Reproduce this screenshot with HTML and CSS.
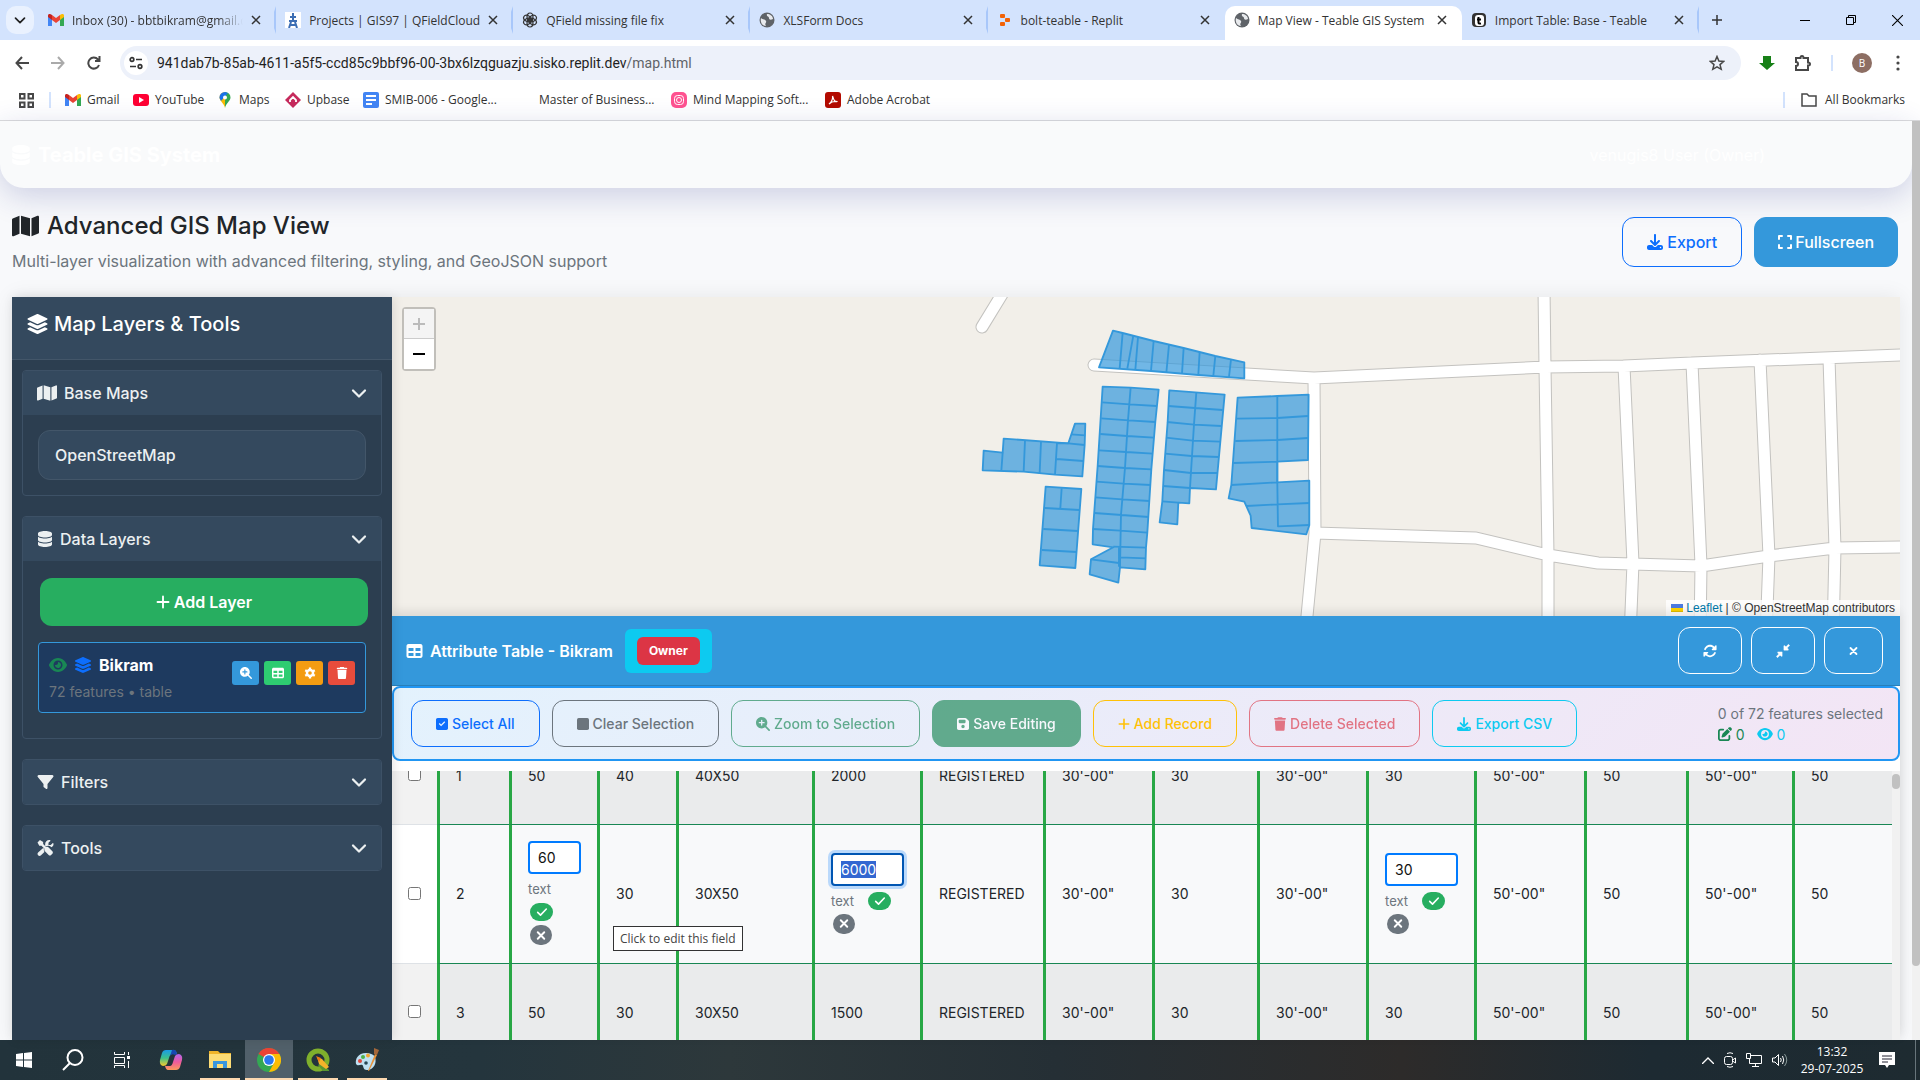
FILE: index.html
```html
<!DOCTYPE html>
<html lang="en">
<head>
<meta charset="utf-8">
<title>Map View - Teable GIS System</title>
<link rel="stylesheet" href="styles.css">
</head>
<body>
<svg class="defs" aria-hidden="true">
  <symbol id="map" viewBox="0 0 576 512"><path d="M384 476.1L192 421.2V35.9L384 90.8V476.1zm32-1.2V88.4L543.1 37.5c15.8-6.3 32.9 5.3 32.9 22.3V394.6c0 9.8-6 18.6-15.1 22.3L416 474.8zM15.1 95.1L160 37.2V423.6L32.9 474.5C17.1 480.8 0 469.2 0 452.2V117.4c0-9.8 6-18.6 15.1-22.3z"/></symbol>
  <symbol id="database" viewBox="0 0 448 512"><path d="M448 80v48c0 44.2-100.3 80-224 80S0 172.2 0 128V80C0 35.8 100.3 0 224 0S448 35.8 448 80zM393.2 214.7c20.8-7.4 39.9-16.9 54.8-28.6V288c0 44.2-100.3 80-224 80S0 332.2 0 288V186.1c14.9 11.8 34 21.2 54.8 28.6C99.7 230.7 159.5 240 224 240s124.3-9.3 169.2-25.3zM0 346.1c14.9 11.8 34 21.2 54.8 28.6C99.7 390.7 159.5 400 224 400s124.3-9.3 169.2-25.3c20.8-7.4 39.9-16.9 54.8-28.6V432c0 44.2-100.3 80-224 80S0 476.2 0 432V346.1z"/></symbol>
  <symbol id="layers" viewBox="0 0 576 512"><path d="M264.5 5.2c14.9-6.9 32.1-6.9 47 0l218.6 101c8.5 3.9 13.9 12.4 13.9 21.8s-5.4 17.9-13.9 21.8l-218.6 101c-14.9 6.9-32.1 6.9-47 0L45.9 149.8C37.4 145.8 32 137.3 32 128s5.4-17.9 13.9-21.8L264.5 5.2zM476.9 209.6l53.2 24.6c8.5 3.9 13.9 12.4 13.9 21.8s-5.4 17.9-13.9 21.8l-218.6 101c-14.9 6.9-32.1 6.9-47 0L45.9 277.8C37.4 273.8 32 265.3 32 256s5.4-17.9 13.9-21.8l53.2-24.6 152 70.2c23.4 10.8 50.4 10.8 73.8 0l152-70.2zm-152 198.2l152-70.2 53.2 24.6c8.5 3.9 13.9 12.4 13.9 21.8s-5.4 17.9-13.9 21.8l-218.6 101c-14.9 6.9-32.1 6.9-47 0L45.9 405.8C37.4 401.8 32 393.3 32 384s5.4-17.9 13.9-21.8l53.2-24.6 152 70.2c23.4 10.8 50.4 10.8 73.8 0z"/></symbol>
  <symbol id="filter" viewBox="0 0 512 512"><path d="M3.9 54.9C10.5 40.9 24.5 32 40 32H472c15.5 0 29.5 8.9 36.1 22.9s4.6 30.5-5.2 42.5L320 320.9V448c0 12.1-6.8 23.2-17.7 28.6s-23.8 4.3-33.5-3l-64-48c-8.1-6-12.8-15.5-12.8-25.6V320.9L9 97.3C-.7 85.4-2.8 68.8 3.9 54.9z"/></symbol>
  <symbol id="tools" viewBox="0 0 512 512"><path d="M78 1L0 79l56 104h72l96 96c-12 26-8 58 14 80l118 118c22 22 57 22 79 0l40-40c22-22 22-57 0-79L357 240c-22-22-54-26-80-14l-96-96V64zM508 108c-3-12-18-15-26-7l-60 60h-71V90l60-60c8-8 5-23-7-26-90-20-165 50-158 138l-6 38 64 20c40-25 92-14 124 18l14 14c52-22 82-75 66-124zM19 397c-25 26-25 67 0 93 26 25 67 25 93 0l110-110c-20-30-24-66-12-98l-30-30z"/></symbol>
  <symbol id="chevron" viewBox="0 0 512 512"><path d="M64 176L256 368 448 176" fill="none" stroke="currentColor" stroke-width="72" stroke-linecap="round" stroke-linejoin="round"/></symbol>
  <symbol id="plus" viewBox="0 0 448 512"><path d="M224 80V432M48 256H400" fill="none" stroke="currentColor" stroke-width="60" stroke-linecap="round"/></symbol>
  <symbol id="table" viewBox="0 0 512 512"><path d="M64 256V160H224v96H64zm0 64H224v96H64V320zm224 96V320H448v96H288zM448 256H288V160H448v96zM64 32C28.7 32 0 60.7 0 96V416c0 35.3 28.7 64 64 64H448c35.3 0 64-28.7 64-64V96c0-35.3-28.7-64-64-64H64z"/></symbol>
  <symbol id="download" viewBox="0 0 512 512"><path d="M288 32c0-17.7-14.3-32-32-32s-32 14.3-32 32V274.7l-73.4-73.4c-12.5-12.5-32.8-12.5-45.3 0s-12.5 32.8 0 45.3l128 128c12.5 12.5 32.8 12.5 45.3 0l128-128c12.5-12.5 12.5-32.8 0-45.3s-32.8-12.5-45.3 0L288 274.7V32zM64 352c-35.3 0-64 28.7-64 64v32c0 35.3 28.7 64 64 64H448c35.3 0 64-28.7 64-64V416c0-35.3-28.7-64-64-64H346.5l-45.3 45.3c-25 25-65.5 25-90.5 0L165.5 352H64zm368 56a24 24 0 1 1 0 48 24 24 0 1 1 0-48z"/></symbol>
  <symbol id="expand" viewBox="0 0 448 512"><path d="M32 160V64H128M320 64H416V160M416 352V448H320M128 448H32V352" fill="none" stroke="currentColor" stroke-width="64" stroke-linecap="round" stroke-linejoin="round"/></symbol>
  <symbol id="trash" viewBox="0 0 448 512"><path d="M135.2 17.7L128 32H32C14.3 32 0 46.3 0 64S14.3 96 32 96H416c17.7 0 32-14.3 32-32s-14.3-32-32-32H320l-7.2-14.3C307.4 6.8 296.3 0 284.2 0H163.8c-12.1 0-23.2 6.8-28.6 17.7zM416 128H32L53.2 467c1.6 25.3 22.6 45 47.9 45H346.9c25.3 0 46.3-19.7 47.9-45L416 128z"/></symbol>
  <symbol id="checkbox" viewBox="0 0 448 512"><path fill-rule="evenodd" d="M64 32C28.700 32 0 60.700 0 96V416c0 35.300 28.700 64 64 64H384c35.300 0 64-28.700 64-64V96c0-35.300-28.700-64-64-64zM103 253l34-34 55 55 119-119 34 34-153 153z"/></symbol>
  <symbol id="square" viewBox="0 0 448 512"><rect y="32" width="448" height="448" rx="64"/></symbol>
  <symbol id="save" viewBox="0 0 448 512"><path d="M64 32C28.700 32 0 60.700 0 96V416c0 35.300 28.700 64 64 64H384c35.300 0 64-28.700 64-64V173.300c0-17-6.700-33.300-18.700-45.300L352 50.700C340 38.700 323.700 32 306.700 32H64zm0 96c0-17.700 14.300-32 32-32H288c17.700 0 32 14.300 32 32v64c0 17.700-14.300 32-32 32H96c-17.700 0-32-14.300-32-32V128zM224 288a64 64 0 1 1 0 128 64 64 0 1 1 0-128z" fill-rule="evenodd"/></symbol>
  <symbol id="zoom" viewBox="0 0 512 512"><path d="M416 208c0 45.9-14.9 88.3-40 122.7L502.6 457.4c12.5 12.5 12.5 32.8 0 45.3s-32.8 12.5-45.3 0L330.7 376c-34.4 25.2-76.8 40-122.7 40C93.1 416 0 322.900 0 208S93.1 0 208 0S416 93.1 416 208zM184 296c0 13.3 10.7 24 24 24s24-10.7 24-24V232h64c13.3 0 24-10.700 24-24s-10.7-24-24-24H232V120c0-13.3-10.7-24-24-24s-24 10.7-24 24v64H120c-13.3 0-24 10.7-24 24s10.7 24 24 24h64v64z"/></symbol>
  <symbol id="eye" viewBox="0 0 576 512"><path d="M288 32c-80.8 0-145.5 36.8-192.6 80.6C48.6 156 17.3 208 2.5 243.7c-3.3 7.9-3.3 16.7 0 24.6C17.3 304 48.6 356 95.4 399.4C142.5 443.2 207.2 480 288 480s145.5-36.8 192.6-80.6c46.8-43.5 78.1-95.4 93-131.1c3.3-7.9 3.3-16.7 0-24.6c-14.9-35.7-46.2-87.7-93-131.1C433.5 68.8 368.8 32 288 32zM144 256a144 144 0 1 1 288 0 144 144 0 1 1 -288 0zm144-64c0 35.3-28.7 64-64 64c-7.1 0-13.9-1.2-20.3-3.3c-5.5-1.8-11.9 1.6-11.7 7.4c.3 6.9 1.3 13.8 3.2 20.7c13.700 51.2 66.4 81.6 117.600 67.9s81.6-66.4 67.9-117.6c-11.1-41.5-47.8-69.4-88.6-71.1c-5.8-.2-9.2 6.1-7.4 11.7c2.1 6.4 3.3 13.2 3.3 20.3z"/></symbol>
  <symbol id="edit" viewBox="0 0 512 512"><path d="M471.6 21.7c-21.9-21.9-57.3-21.9-79.2 0L362.3 51.7l97.9 97.9 30.1-30.1c21.9-21.9 21.9-57.3 0-79.2L471.600 21.7zm-299.2 220c-6.1 6.1-10.8 13.6-13.5 21.9l-29.6 88.8c-2.9 8.6-.6 18.1 5.8 24.6s15.9 8.7 24.6 5.8l88.8-29.6c8.2-2.7 15.7-7.4 21.9-13.5L437.7 172.3 339.7 74.3 172.4 241.7zM96 64C43 64 0 107 0 160V416c0 53 43 96 96 96H352c53 0 96-43 96-96V320c0-17.7-14.3-32-32-32s-32 14.3-32 32v96c0 17.7-14.3 32-32 32H96c-17.7 0-32-14.3-32-32V160c0-17.7 14.3-32 32-32h96c17.7 0 32-14.3 32-32s-14.3-32-32-32H96z"/></symbol>
  <symbol id="rotate" viewBox="0 0 512 512"><path d="M142.9 142.9c62.2-62.2 162.7-62.5 225.3-1L327 183c-6.9 6.9-8.9 17.2-5.2 26.2s12.500 14.8 22.2 14.8H463.5h8.5c13.3 0 24-10.7 24-24V72c0-9.7-5.8-18.5-14.8-22.2s-19.3-1.7-26.2 5.2L413.4 96.6c-87.6-86.5-228.7-86.2-315.8 1C73.2 122 55.6 150.7 44.8 181.4c-5.9 16.7 2.9 34.9 19.5 40.8s34.9-2.9 40.8-19.5c7.7-21.8 20.2-42.3 37.8-59.8zM16 312v7.600.7V440c0 9.7 5.8 18.5 14.8 22.2s19.3 1.7 26.2-5.2l41.6-41.6c87.6 86.5 228.7 86.2 315.8-1c24.4-24.4 42.1-53.1 52.9-83.7c5.9-16.7-2.9-34.9-19.5-40.8s-34.9 2.9-40.8 19.5c-7.7 21.8-20.2 42.3-37.8 59.8c-62.2 62.2-162.7 62.5-225.3 1L185 329c6.9-6.9 8.9-17.2 5.2-26.2s-12.5-14.8-22.2-14.8H48.4h-.7H40c-13.3 0-24 10.7-24 24z"/></symbol>
  <symbol id="minimize" viewBox="0 0 512 512"><path d="M456 12L500 56 410 146 448 184V224H288V64H328L366 102ZM56 500L12 456 102 366 64 328V288H224V448H184L146 410Z" stroke="currentColor" stroke-width="16" stroke-linejoin="round"/></symbol>
  <symbol id="cross" viewBox="0 0 384 512"><path d="M64 128L320 384M320 128L64 384" fill="none" stroke="currentColor" stroke-width="76" stroke-linecap="round"/></symbol>
  <symbol id="check" viewBox="0 0 448 512"><path d="M40 270L160 390 408 130" fill="none" stroke="currentColor" stroke-width="68" stroke-linecap="round" stroke-linejoin="round"/></symbol>
  <symbol id="gear" viewBox="0 0 512 512"><circle cx="256" cy="256" r="130" fill="none" stroke="currentColor" stroke-width="104"/><path d="M256 20V130M256 382V492M52 138L147 193M365 319L460 374M460 138L365 193M147 319L52 374" stroke="currentColor" stroke-width="100"/></symbol>
  <symbol id="x" viewBox="0 0 10 10"><path d="M1 1L9 9M9 1L1 9" stroke="currentColor" stroke-width="1.500"/></symbol>
  <symbol id="globe" viewBox="0 0 16 16"><circle cx="8" cy="8" r="7.500" fill="#5f6368"/><path d="M2 6C4 8 6 7 7 9S5 11 7 14C3 14 1 10 2 6ZM8 2C7 5 10 4 10 6S12 8 14 7C14 4 11 2 8 2Z" fill="#e8eaed"/></symbol>
  <symbol id="gmail" viewBox="0 0 16 12"><path d="M0 1.500V12H4V4.500z" fill="#4285f4"/><path d="M12 4.500V12H16V1.500z" fill="#34a853"/><path d="M12 1V6L16 3V1.500C16 0 14-.5 12 1z" fill="#fbbc04"/><path d="M4 1V6L8 9 12 6V1L8 4z" fill="#ea4335"/><path d="M0 1.500V3L4 6V1C2-.5 0 0 0 1.500z" fill="#c5221f"/></symbol>
</svg>

<header class="chrome">
  <div class="tabstrip">
    <button class="tabsearch" aria-label="Search tabs"><svg width="12" height="12"><use href="#chevron"/></svg></button>
    <div class="tabs">
      <div class="tab"><svg width="16" height="12"><use href="#gmail"/></svg><span class="fade">Inbox (30) - bbtbikram@gmail.com</span><button aria-label="Close"><svg width="10" height="10"><use href="#x"/></svg></button></div>
      <div class="tab"><svg width="16" height="16" viewBox="0 0 16 16"><path fill="#fff" d="M0 0h16v16H0z"/><path d="M8 1V9M5 5H11M4 9H12M6 10L4 16M10 10L12 16M5 13H11" stroke="#3c6eb4" stroke-width="2"/></svg><span>Projects | GIS97 | QFieldCloud</span><button aria-label="Close"><svg width="10" height="10"><use href="#x"/></svg></button></div>
      <div class="tab"><svg width="16" height="16" viewBox="0 0 16 16" fill="none" stroke="#333" stroke-width="1.200"><ellipse cx="8" cy="5" rx="3" ry="4"/><ellipse cx="8" cy="5" rx="3" ry="4" transform="rotate(60 8 8)"/><ellipse cx="8" cy="5" rx="3" ry="4" transform="rotate(120 8 8)"/><ellipse cx="8" cy="5" rx="3" ry="4" transform="rotate(180 8 8)"/><ellipse cx="8" cy="5" rx="3" ry="4" transform="rotate(240 8 8)"/><ellipse cx="8" cy="5" rx="3" ry="4" transform="rotate(300 8 8)"/></svg><span>QField missing file fix</span><button aria-label="Close"><svg width="10" height="10"><use href="#x"/></svg></button></div>
      <div class="tab"><svg width="16" height="16"><use href="#globe"/></svg><span>XLSForm Docs</span><button aria-label="Close"><svg width="10" height="10"><use href="#x"/></svg></button></div>
      <div class="tab"><svg width="16" height="16" viewBox="0 0 16 16" fill="#f26207"><rect x="3" y="2" width="5" height="4" rx="1"/><rect x="8" y="6" width="5" height="4" rx="1"/><rect x="3" y="10" width="5" height="4" rx="1"/></svg><span>bolt-teable - Replit</span><button aria-label="Close"><svg width="10" height="10"><use href="#x"/></svg></button></div>
      <div class="tab active"><svg width="16" height="16"><use href="#globe"/></svg><span>Map View - Teable GIS System</span><button aria-label="Close"><svg width="10" height="10"><use href="#x"/></svg></button></div>
      <div class="tab last"><svg width="16" height="16" viewBox="0 0 16 16"><rect x="1" y="1" width="14" height="14" rx="4"/><rect x="4" y="3" width="9" height="11" rx="3" fill="#fff"/><path d="M7.500 5V10.500Q7.500 12 10 11.500M6 7.500H10" stroke="#000" stroke-width="2" fill="none"/></svg><span>Import Table: Base - Teable</span><button aria-label="Close"><svg width="10" height="10"><use href="#x"/></svg></button></div>
    </div>
    <button class="newtab" aria-label="New tab"><svg width="12" height="12" viewBox="0 0 12 12"><path d="M6 1V11M1 6H11" stroke="#333" stroke-width="1.500"/></svg></button>
    <div class="winctl">
      <button aria-label="Minimize"><svg width="10" height="10" viewBox="0 0 10 10"><path d="M0 5.500H10" stroke="#000"/></svg></button>
      <button aria-label="Restore"><svg width="10" height="10" viewBox="0 0 10 10" fill="none" stroke="#000"><path d="M.5 2.500H7.500V9.500H.5ZM2.500 2.500V.5H9.500V7.500H7.500"/></svg></button>
      <button aria-label="Close window"><svg width="11" height="11" viewBox="0 0 10 10"><path d="M0 0L10 10M10 0L0 10" stroke="#000"/></svg></button>
    </div>
  </div>
  <div class="addressrow">
    <button aria-label="Back"><svg width="14" height="14" viewBox="0 0 14 14" fill="none" stroke="#474747" stroke-width="2"><path d="M14 7H2M7 1L1.500 7 7 13"/></svg></button>
    <button aria-label="Forward"><svg width="14" height="14" viewBox="0 0 14 14" fill="none" stroke="#aaa" stroke-width="2"><path d="M0 7H12M7 1L12.500 7 7 13"/></svg></button>
    <button aria-label="Reload"><svg width="14" height="14" viewBox="0 0 14 14" fill="none" stroke="#474747" stroke-width="2"><path d="M12 9A5.500 5.500 0 1 1 11 3.500M12.500 0V5H8"/></svg></button>
    <div class="omnibox">
      <span class="site"><svg width="14" height="14" viewBox="0 0 14 14" fill="none" stroke="#333" stroke-width="1.700"><circle cx="3" cy="3.500" r="1.800"/><path d="M7 3.500H13M1 10.500H7"/><circle cx="11" cy="10.500" r="1.800"/></svg></span>
      <span class="url">941dab7b-85ab-4611-a5f5-ccd85c9bbf96-00-3bx6lzqguazju.sisko.replit.dev<span>/map.html</span></span>
      <svg width="16" height="16" viewBox="0 0 16 16" fill="none" stroke="#474747" stroke-width="1.500"><path d="M8 1.500L9.900 6 14.800 6.400 11 9.600 12.200 14.300 8 11.800 3.800 14.300 5 9.600 1.200 6.400 6.100 6Z"/></svg>
    </div>
    <div class="ext">
      <svg width="16" height="16" viewBox="0 0 16 16" fill="#178017"><path d="M4 1H12V8H16L8 15 0 8H4Z"/></svg>
      <svg width="18" height="18" viewBox="0 0 18 18" fill="none" stroke="#474747" stroke-width="2"><path d="M2 4H6.500Q6.500 2 8 2T9.500 4H14V8.500Q16 8.500 16 10T14 11.500V16H2V12Q4 12 4 10T2 8Z"/></svg>
      <i class="sep"></i><span class="avatar">B</span>
      <svg width="4" height="16" viewBox="0 0 4 16" fill="#474747"><circle cx="2" cy="2" r="1.600"/><circle cx="2" cy="8" r="1.600"/><circle cx="2" cy="14" r="1.600"/></svg>
    </div>
  </div>
  <nav class="bookmarks">
    <svg class="apps" width="15" height="15" viewBox="0 0 15 15" fill="none" stroke="#474747" stroke-width="2"><path d="M1 1H5.500V5.500H1ZM9.500 1H14V5.500H9.500ZM1 9.500H5.500V14H1ZM9.500 9.500H14V14H9.500Z"/></svg>
    <i class="sep"></i>
    <a href="#gmail" class="bm w-gmail"><svg width="16" height="12"><use href="#gmail"/></svg>Gmail</a>
    <a href="#youtube" class="bm w-yt"><svg width="16" height="12" viewBox="0 0 16 12"><rect width="16" height="12" rx="3" fill="#f03"/><path d="M6 3V9L11 6Z" fill="#fff"/></svg>YouTube</a>
    <a href="#maps" class="bm w-maps"><svg width="16" height="16" viewBox="0 0 16 16"><path d="M8 0A5.500 5.500 0 0 1 13.500 5.500C13.500 9 9 11 8 16Z" fill="#34a853"/><path d="M8 0A5.500 5.500 0 0 0 2.500 5.500C2.500 9 7 11 8 16Z" fill="#fbbc04"/><path d="M2.500 6A5.500 5.500 0 0 1 8 0L11 1 4 9Z" fill="#1a73e8"/><circle cx="8" cy="5.500" r="2" fill="#fff"/></svg>Maps</a>
    <a href="#upbase" class="bm w-up"><svg width="16" height="16" viewBox="0 0 16 16"><path d="M8 0L16 8 8 16 0 8Z" fill="#c62a5c"/><path d="M5 10V8L8 5 11 8V10" stroke="#fff" stroke-width="1.800" fill="none"/></svg>Upbase</a>
    <a href="#smib" class="bm w-smib"><svg width="16" height="16" viewBox="0 0 16 16"><rect width="16" height="16" rx="2" fill="#4285f4"/><path d="M3 4H13M3 8H13M3 12H9" stroke="#fff" stroke-width="1.800"/></svg>SMIB-006 - Google...</a>
    <a href="#mob" class="bm w-mob"><svg width="16" height="16"></svg>Master of Business...</a>
    <a href="#mind" class="bm w-mind"><svg width="16" height="16" viewBox="0 0 16 16"><rect width="16" height="16" rx="5" fill="#ff5290"/><circle cx="8" cy="8" r="2.500" fill="none" stroke="#fff"/><rect x="3.500" y="3.500" width="9" height="9" rx="3" fill="none" stroke="#fff"/></svg>Mind Mapping Soft...</a>
    <a href="#acrobat" class="bm"><svg width="16" height="16" viewBox="0 0 16 16"><rect width="16" height="16" rx="3" fill="#b30b00"/><path d="M4 12C7 10 8 6 7.500 4 9 9 10 10 12.500 9.500 9 9 6 10 4 12Z" fill="none" stroke="#fff" stroke-width="1.200"/></svg>Adobe Acrobat</a>
    <i class="sep push"></i>
    <a href="#all" class="bm all"><svg width="16" height="14" viewBox="0 0 16 14" fill="none" stroke="#474747" stroke-width="1.500"><path d="M1 1H6L8 3H15V13H1Z"/></svg>All Bookmarks</a>
  </nav>
</header>

<div class="viewport">
<div class="page">
  <nav class="navbar">
    <a href="#home" class="brand"><svg width="18" height="20"><use href="#database"/></svg>Teable GIS System</a>
    <span class="user">venugis8 User (Owner)</span>
  </nav>
  <main class="content">
    <div class="pagehead">
      <div>
        <h1><svg width="27" height="24"><use href="#map"/></svg>Advanced GIS Map View</h1>
        <p>Multi-layer visualization with advanced filtering, styling, and GeoJSON support</p>
      </div>
      <div class="headbtns">
        <button class="btn lg blue"><svg width="16" height="16"><use href="#download"/></svg>Export</button>
        <button class="btn lg solid"><svg width="14" height="16"><use href="#expand"/></svg>Fullscreen</button>
      </div>
    </div>
    <div class="workspace">
      <aside class="sidebar">
        <h2><svg width="23" height="20"><use href="#layers"/></svg>Map Layers &amp; Tools</h2>
        <section class="panel"><h3><svg width="20" height="18"><use href="#map"/></svg>Base Maps<svg class="chev" width="16" height="16"><use href="#chevron"/></svg></h3>
          <div class="panelbody"><select aria-label="Base map"><option>OpenStreetMap</option></select></div></section>
        <section class="panel"><h3><svg width="16" height="16"><use href="#database"/></svg>Data Layers<svg class="chev" width="16" height="16"><use href="#chevron"/></svg></h3>
          <div class="panelbody layers">
            <button class="add"><svg width="14" height="16"><use href="#plus"/></svg>Add Layer</button>
            <div class="layer">
              <div><strong><svg class="green" width="18" height="16"><use href="#eye"/></svg><svg class="cobalt" width="18" height="16"><use href="#layers"/></svg>Bikram</strong><small>72 features • table</small></div>
              <div class="acts">
                <button class="a1" aria-label="Zoom to layer"><svg width="12" height="12"><use href="#zoom"/></svg></button>
                <button class="a2" aria-label="Attribute table"><svg width="12" height="12"><use href="#table"/></svg></button>
                <button class="a3" aria-label="Style"><svg width="12" height="12"><use href="#gear"/></svg></button>
                <button class="a4" aria-label="Delete"><svg width="12" height="12"><use href="#trash"/></svg></button>
              </div>
            </div>
          </div></section>
        <section class="panel"><h3><svg width="17" height="16"><use href="#filter"/></svg>Filters<svg class="chev" width="16" height="16"><use href="#chevron"/></svg></h3></section>
        <section class="panel"><h3><svg width="17" height="16"><use href="#tools"/></svg>Tools<svg class="chev" width="16" height="16"><use href="#chevron"/></svg></h3></section>
      </aside>
      <div class="mapside">
        <div class="map">
          <svg class="tiles" width="1508" height="319">
            <defs>
              <g id="roads" fill="none" stroke-linejoin="round" stroke-linecap="round">
                <path d="M612-6L590 30M702 68L922 81 1153 70 1232 69 1300 66 1508 58 1800 48M922 81L923 236 915 319 914 340M1152-9L1153 70 1156 258V340M923 236L1084 241 1156 258 1206 266 1309 269 1377 259 1443 251 1508 250H1800M1232 69L1241 266 1238 340M1300 66L1309 268 1308 340M1368 63L1377 259 1374 340M1437 61L1443 251 1441 340"/>
              </g>
            </defs>
            <use href="#roads" stroke="#c3c2bf" stroke-width="13"/>
            <use href="#roads" stroke="#fff" stroke-width="11"/>
            <g transform="translate(568 -7) scale(.3333)" fill="#3498db" fill-opacity=".7" stroke="#3498db" stroke-width="5.500" stroke-linejoin="round">
              <path d="M459 122L488 129 581 153 671 174 766 198 853 217V265L715 255 573 243 417 232Z"/>
              <path fill="none" d="M488 129L479 236M520 137L502 236M534 142L526 240M581 153L573 243M627 165L619 249M671 174L666 251M719 186L715 255M766 198L760 258M813 209L807 261"/>
              <path d="M428 290L512 293 596 299 586 396 574 538 562 728 558 773 556 838 480 832 475 878 389 853 393 808 460 772 398 763 399 717 413 528Z"/>
              <path fill="none" d="M512 293L504 391 495 534 483 675 480 832M427 337L509 343 590 348M424 385L506 391 586 396M421 432L501 438 581 443M417 481L498 486 578 491M413 528L495 534 574 538M409 575L491 581 572 585M406 622L487 628 569 633M403 669L485 675 566 681M399 717L481 722 562 728M460 770L558 773M480 802L558 805M393 808L477 819M477 770V830"/>
              <path d="M628 301L794 314 768 598 690 594 688 640 655 638 652 703 599 697 607 634 612 540 623 396Z"/>
              <path fill="none" d="M709 308L702 404 690 594M625 348L705 354 788 360M621 396L702 404 784 408M618 443L698 452 780 455M615 491L695 498 776 501M612 540L693 549 772 549M609 588L690 594M607 634L655 638"/>
              <path d="M833 323L952 318 1046 314 1044 510 952 515V577L1048 572V706L1039 733 875 714 872 677 853 635 806 625 814 585Z"/>
              <path fill="none" d="M952 318V577L954 709 1048 705M830 386L952 384 1044 378M826 453L952 450 1044 444M820 519L952 515M814 585L952 577M860 648L952 643 1048 639"/>
              <path d="M131 446L325 460 345 401H376L374 465 367 559 285 554 191 545 68 541 71 482 128 488Z"/>
              <path fill="none" d="M128 488L124 543M195 452L191 545M243 456L239 550M291 459L285 554M325 460L374 465M291 459L325 460M289 507L370 513M333 433L376 436"/>
              <path d="M257 590L364 597 346 834 239 826Z"/>
              <path fill="none" d="M305 595L301 655M254 654L358 660M250 717L354 723M246 780L350 786"/>
            </g>
          </svg>
          <div class="zoomctl"><button disabled aria-label="Zoom in"><svg width="12" height="12" viewBox="0 0 12 12"><path d="M6 0V12M0 6H12" stroke="currentColor" stroke-width="2"/></svg></button><button aria-label="Zoom out"><svg width="12" height="12" viewBox="0 0 12 12"><path d="M0 6H12" stroke="currentColor" stroke-width="2"/></svg></button></div>
          <div class="attribution"><svg width="12" height="8" viewBox="0 0 12 8"><path fill="#4c7be1" d="M0 0h12v4H0z"/><path fill="#ffd500" d="M0 4h12v3H0z"/><path fill="#e0bc00" d="M0 7h12v1H0z"/></svg> <a href="#leaflet">Leaflet</a> | © OpenStreetMap contributors</div>
        </div>
        <section class="attr">
          <header class="attrhead">
            <h4><svg width="17" height="16"><use href="#table"/></svg>Attribute Table - Bikram</h4>
            <span class="badge"><b>Owner</b></span>
            <div class="attrbtns">
              <button class="btn white" aria-label="Refresh"><svg width="14" height="14"><use href="#rotate"/></svg></button>
              <button class="btn white" aria-label="Minimize table"><svg width="14" height="14"><use href="#minimize"/></svg></button>
              <button class="btn white" aria-label="Close table"><svg width="9" height="14"><use href="#cross"/></svg></button>
            </div>
          </header>
          <div class="toolbar">
            <button class="btn blue"><svg width="12" height="14"><use href="#checkbox"/></svg>Select All</button>
            <button class="btn gray"><svg width="12" height="14"><use href="#square"/></svg>Clear Selection</button>
            <button class="btn grn dim"><svg width="14" height="14"><use href="#zoom"/></svg>Zoom to Selection</button>
            <button class="btn grnfill dim"><svg width="12" height="14"><use href="#save"/></svg>Save Editing</button>
            <button class="btn yellow"><svg width="12" height="14"><use href="#plus"/></svg>Add Record</button>
            <button class="btn red dim"><svg width="12" height="14"><use href="#trash"/></svg>Delete Selected</button>
            <button class="btn cyan"><svg width="14" height="14"><use href="#download"/></svg>Export CSV</button>
            <div class="stats"><span>0 of 72 features selected</span><span class="counts"><span class="green"><svg width="14" height="14"><use href="#edit"/></svg>0</span><span class="aqua"><svg width="16" height="14"><use href="#eye"/></svg>0</span></span></div>
          </div>
          <div class="tablebox">
            <div class="scroller">
            <table>
              <colgroup><col class="c45"><col class="c72"><col class="c88"><col class="c79"><col class="c136"><col class="c108"><col class="c123"><col class="c109"><col class="c105"><col class="c109"><col class="c108"><col class="c110"><col class="c102"><col class="c106"><col></colgroup>
              <tbody>
              <tr><td><input type="checkbox" aria-label="Select row 1"></td><td>1</td><td>50</td><td>40</td><td>40X50</td><td>2000</td><td>REGISTERED</td><td>30'-00"</td><td>30</td><td>30'-00"</td><td>30</td><td>50'-00"</td><td>50</td><td>50'-00"</td><td>50</td></tr>
              <tr class="editing"><td><input type="checkbox" aria-label="Select row 2"></td><td>2</td>
                <td><div class="edit"><input type="text" value="60" aria-label="Value"><span>text</span><button class="ok" aria-label="Save"><svg width="12" height="12"><use href="#check"/></svg></button><button class="no" aria-label="Cancel"><svg width="12" height="13"><use href="#cross"/></svg></button></div></td>
                <td class="tiphost">30<span class="tip" role="tooltip">Click to edit this field</span></td><td>30X50</td>
                <td><div class="edit"><input type="text" class="focus" id="active-field" value="6000" aria-label="Value"><span>text</span><button class="ok" aria-label="Save"><svg width="12" height="12"><use href="#check"/></svg></button><button class="no" aria-label="Cancel"><svg width="12" height="13"><use href="#cross"/></svg></button></div></td>
                <td>REGISTERED</td><td>30'-00"</td><td>30</td><td>30'-00"</td>
                <td><div class="edit"><input type="text" value="30" aria-label="Value"><span>text</span><button class="ok" aria-label="Save"><svg width="12" height="12"><use href="#check"/></svg></button><button class="no" aria-label="Cancel"><svg width="12" height="13"><use href="#cross"/></svg></button></div></td>
                <td>50'-00"</td><td>50</td><td>50'-00"</td><td>50</td></tr>
              <tr><td><input type="checkbox" aria-label="Select row 3"></td><td>3</td><td>50</td><td>30</td><td>30X50</td><td>1500</td><td>REGISTERED</td><td>30'-00"</td><td>30</td><td>30'-00"</td><td>30</td><td>50'-00"</td><td>50</td><td>50'-00"</td><td>50</td></tr>
              </tbody>
            </table>
            </div>
            <div class="innerbar"><i></i></div>
          </div>
        </section>
      </div>
    </div>
  </main>
</div>
<div class="pagebar"><i></i></div>
</div>

<footer class="taskbar">
  <button aria-label="Start"><svg width="16" height="16" viewBox="0 0 16 16" fill="#fff"><path d="M0 2L7 1V7.500H0ZM8 1L16 0V7.500H8ZM0 8.500H7V15L0 14ZM8 8.500H16V16L8 15Z"/></svg></button>
  <button aria-label="Search"><svg width="22" height="22" viewBox="0 0 22 22" fill="none" stroke="#fff" stroke-width="2"><circle cx="13" cy="8.500" r="7.500"/><path d="M8 14L1 21"/></svg></button>
  <button aria-label="Task view"><svg width="16" height="16" viewBox="0 0 16 16" fill="none" stroke="#fff"><path d="M.5 0V2.500H10.500V0M.5 5.500H10.500V11.500H.5ZM.5 16V13.500H10.500V16M14.500 0V3M14.500 9V16"/><rect x="13.500" y="4.500" width="2" height="2" fill="#fff"/></svg></button>
  <button aria-label="Copilot"><svg width="24" height="22" viewBox="0 0 24 22"><defs><linearGradient id="cpa" x1="0" y1="0" x2="0" y2="1"><stop offset="0" stop-color="#1a9be8"/><stop offset=".5" stop-color="#3bc08c"/><stop offset="1" stop-color="#f9c92b"/></linearGradient><linearGradient id="cpb" x1="0" y1="0" x2="0" y2="1"><stop offset="0" stop-color="#b066ee"/><stop offset=".5" stop-color="#ee5a9c"/><stop offset="1" stop-color="#fb9a5a"/></linearGradient></defs><path d="M7 1H15Q17 1 18 5H13Q11 5 10 9L8 15Q7 17 4 17 0 16 1 11L3 4Q4 1 7 1Z" fill="url(#cpa)"/><path d="M13 1Q17 0 18 5L16 6Q13 4 11 7Z" fill="#1748b0"/><path d="M17 21H9Q7 21 6 17H11Q13 17 14 13L16 7Q17 5 20 5 24 6 23 11L21 18Q20 21 17 21Z" fill="url(#cpb)"/></svg></button>
  <button class="run" aria-label="File Explorer"><svg width="22" height="20" viewBox="0 0 22 20"><path d="M0 1H9L11 3H22V18H0Z" fill="#f0b429"/><path d="M0 4H22V18H0Z" fill="#fddc75"/><path d="M4 18V11H18V18H14V14H8V18Z" fill="#3a96dd"/></svg></button>
  <button class="run current" aria-label="Chrome"><svg width="24" height="24" viewBox="0 0 24 24"><circle cx="12" cy="12" r="12" fill="#34a853"/><path d="M12 12L1.600 6A12 12 0 0 1 22.400 6Z" fill="#ea4335"/><path d="M12 6H22.400A12 12 0 0 1 12 24L17 15Z" fill="#fbbc04"/><path d="M1.600 6A12 12 0 0 1 12 0V6Z" fill="#ea4335"/><circle cx="12" cy="12" r="6" fill="#fff"/><circle cx="12" cy="12" r="4.800" fill="#2a78ee"/></svg></button>
  <button class="run" aria-label="QGIS"><svg width="24" height="24" viewBox="0 0 24 24"><circle cx="12" cy="12" r="9" fill="none" stroke="#7fb02c" stroke-width="5"/><path d="M15 15L23 22V23H17L12 17Z" fill="#589632"/><path d="M11 9L16 11 23 19 20 21 13 16Z" fill="#f3b32a"/><path d="M10 8L15 10 13 14Z" fill="#ee7913"/></svg></button>
  <button class="run" aria-label="Paint"><svg width="24" height="24" viewBox="0 0 24 24"><path d="M11 5C3 5 0 11 1 16 3 19 7 15 8 18S9 22 13 22C19 21 22 15 20 9 18 6 15 5 11 5Z" fill="#bfe0f2"/><circle cx="5" cy="13" r="2" fill="#e0483e"/><circle cx="8" cy="9" r="2" fill="#4db04a"/><circle cx="13" cy="7.500" r="2" fill="#f1a531"/><circle cx="11" cy="15" r="1.800" fill="#264653"/><path d="M13 23L20 6 22 7 14 23Z" fill="#e8923a"/><path d="M19 6L19 0 24 2 22 7Z" fill="#a3673b"/></svg></button>
  <div class="tray">
    <svg width="12" height="7" viewBox="0 0 12 7" fill="none" stroke="#fff" stroke-width="1.400"><path d="M0 7L6 1 12 7"/></svg>
    <svg width="12" height="16" viewBox="0 0 12 16" fill="none" stroke="#fff"><rect x=".5" y="4.500" width="8" height="8" rx="2"/><path d="M8.500 8L11.500 6V11L8.500 9M3 1.500Q6 0 9 1.500M3 14.500Q6 16 9 14.500"/></svg>
    <svg width="16" height="14" viewBox="0 0 16 14" fill="none" stroke="#fff"><path d="M5 2.500H15.500V10.500H3.500V6M9.500 10V13.500M6 13.500H13M.5.500H4.500V5.500H.5Z"/></svg>
    <svg width="17" height="14" viewBox="0 0 17 14" fill="none" stroke="#fff"><path d="M.5 5H3L6.500 1.500V12.500L3 9H.5ZM8.500 5Q10 7 8.500 9M10.500 3Q13 7 10.500 11"/><path d="M12.500 1Q17 7 12.500 13" stroke="#899"/></svg>
    <div class="clock"><span>13:32</span><span>29-07-2025</span></div>
    <svg width="16" height="16" viewBox="0 0 16 16"><path d="M0 0H16V13H10L8 16 6 13H0Z" fill="#fff"/><path d="M3 4H13M3 7H13M3 10H9" stroke="#223" /></svg>
    <i class="peek"></i>
  </div>
</footer>
<script src="main.js"></script>
</body>
</html>
```
FILE: styles.css
```css
* { box-sizing: border-box; }
html, body { height: 100%; }
body { margin: 0; display: flex; flex-direction: column; overflow: hidden; font-family: Inter, "Liberation Sans", sans-serif; font-size: 16px; color: #212529; background: #f8f9fa; }
button { font: inherit; color: inherit; border: 0; background: none; padding: 0; display: flex; align-items: center; justify-content: center; cursor: pointer; }
svg { flex: none; }
svg:not([fill]) { fill: currentColor; }
a { color: inherit; text-decoration: none; }
h1, h2, h3, h4, p { margin: 0; font-weight: 500; }
.defs { position: absolute; width: 0; height: 0; }

/* Browser frame */
.chrome { flex: none; font: 12px/16px "Open Sans", "Noto Sans", sans-serif; color: #333; background: #fff; border-bottom: 1px solid #dcdcdc; }
.tabstrip { display: flex; align-items: center; height: 40px; background: #d3e3fd; padding-left: 6px; }
.tabsearch { width: 28px; height: 28px; border-radius: 10px; background: #e9f1fe; margin-right: 5px; color: #222; }
.tabs { display: flex; flex: 0 1 1660px; min-width: 0; align-self: stretch; }
.tab { flex: 1 1 0; min-width: 0; display: flex; align-items: center; gap: 8px; margin-top: 6px; height: 28px; padding: 0 13px 0 9px; border-right: 2px solid #a8c7fa; border-block: 6px solid transparent; background-clip: padding-box; }
.tab:nth-child(5) { border-right-color: transparent; }
.tab span { flex: 1; min-width: 0; white-space: nowrap; overflow: hidden; padding-top: 1px; }
.fade { -webkit-mask-image: linear-gradient(90deg, #000 85%, transparent); mask-image: linear-gradient(90deg, #000 85%, transparent); }
.tab.active { height: 34px; border: 0; padding-bottom: 6px; padding-right: 15px; background: #fff; border-radius: 10px 10px 0 0; }
.newtab { width: 36px; height: 28px; }
.winctl { display: flex; margin-left: auto; }
.winctl button { width: 46px; height: 34px; }
.addressrow { display: flex; align-items: center; height: 46px; padding: 0 20px 0 4px; }
.addressrow > button { width: 36px; height: 34px; }
.omnibox { flex: 1; display: flex; align-items: center; gap: 9px; height: 34px; margin-left: 8px; padding: 0 16px 0 4px; border-radius: 17px; background: #edf1fa; }
.site { width: 24px; height: 24px; border-radius: 12px; background: #fff; display: flex; align-items: center; justify-content: center; }
.url { flex: 1; font: 14px/20px Roboto, sans-serif; color: #1f1f1f; }
.url span { color: #5f6368; }
.ext { display: flex; align-items: center; gap: 19px; margin-left: 18px; }
.sep { width: 2px; height: 16px; background: #d3e3fd; }
.avatar { width: 20px; height: 20px; border-radius: 10px; background: #8d6e63; color: #fff; font-size: 10px; line-height: 20px; text-align: center; }
.ext .avatar { margin-right: 5px; }
.bookmarks { display: flex; align-items: center; height: 34px; padding: 0 15px 6px 19px; }
.apps { margin-right: 15px; }
.bookmarks .sep { margin-right: 14px; }
.bm { display: flex; align-items: center; gap: 6px; white-space: nowrap; }
.w-gmail { width: 68px; } .w-yt { width: 84px; } .w-maps { width: 68px; } .w-up { width: 78px; }
.w-smib { width: 154px; } .w-mob { width: 154px; } .w-mind { width: 154px; }
.bookmarks .push { margin-left: auto; margin-right: 16px; }
.all { gap: 8px; }

/* Page */
.viewport { flex: 1; min-height: 0; display: flex; background: #f8f9fb; }
.page { flex: 1; min-width: 0; display: flex; flex-direction: column; }
.pagebar { width: 8px; background: #f1f1f1; }
.pagebar i { display: block; height: 92%; background: #c1c1c1; border-radius: 0 0 4px 4px; }
.navbar { flex: none; display: flex; align-items: center; justify-content: space-between; height: 67px; padding: 0 147px 0 12px; background: #f9fafb; border-radius: 0 0 24px 24px; box-shadow: 0 8px 32px rgba(31, 38, 135, .2); color: #fff; }
.brand { display: flex; align-items: center; gap: 8px; font-size: 20px; font-weight: 700; }
.content { flex: 1; min-height: 0; display: flex; flex-direction: column; padding: 0 12px; }
.pagehead { display: flex; justify-content: space-between; align-items: flex-start; height: 109px; padding: 22px 2px 0 0; }
h1 { display: flex; align-items: center; gap: 8px; font-size: 24px; line-height: 32px; }
.pagehead p { margin-top: 7px; font-weight: 400; line-height: 24px; color: #6c757d; }
.headbtns { display: flex; gap: 12px; padding-top: 7px; }
.btn { gap: 4px; height: 47px; padding: 0 24px; border: 1px solid; border-radius: 12px; font-size: 14px; font-weight: 500; white-space: nowrap; }
.btn.lg { height: 50px; font-size: 16px; }
.blue { color: #0d6efd; } .gray { color: #6c757d; } .grn { color: #198754; } .yellow { color: #ffc107; } .red { color: #dc3545; } .cyan { color: #0dcaf0; } .white { color: #fff; }
.btn.solid { gap: 3px; padding: 0 23px; background: #3498db; border-color: #3498db; color: #fff; }
.grnfill { background: #198754; border-color: #198754; color: #fff; }
.dim { opacity: .65; }
.workspace { flex: 1; min-height: 0; display: flex; box-shadow: 0 0 20px rgba(0, 0, 0, .08); }

/* Sidebar */
.sidebar { flex: none; width: 380px; background: #2c3e50; color: #fff; position: relative; z-index: 1; box-shadow: 2px 0 10px rgba(0, 0, 0, .1); }
h2 { display: flex; gap: 5px; height: 63px; padding: 15px 14px; font-size: 20px; line-height: 24px; background: #34495e; border-bottom: 1px solid #435669; margin-bottom: 10px; }
h2 svg { margin-top: 2px; }
.panel { margin: 0 10px 20px; border: 1px solid #3d5166; border-radius: 4px; overflow: hidden; }
h3 { display: flex; align-items: center; gap: 7px; height: 44px; padding: 0 14px; font-size: 16px; background: #34495e; color: #ecf0f1; }
.chev { margin-left: auto; }
.panelbody { padding: 15px; }
.panelbody select { display: block; width: 100%; height: 50px; padding: 0 16px; appearance: none; border: 1px solid #435669; border-radius: 12px; background: #34495e; color: #ecf0f1; font: 500 16px Inter, sans-serif; }
.panelbody.layers { padding-bottom: 25px; }
.add { width: 328px; height: 48px; margin: 2px 0 16px 2px; gap: 4px; border-radius: 12px; background: #27ae60; font-weight: 600; }
.layer { display: flex; justify-content: space-between; align-items: center; height: 71px; padding: 0 10px; border: 1px solid #3498db; border-radius: 4px; background: #1e3a5f; }
.layer strong { display: flex; align-items: center; gap: 7px; line-height: 24px; }
.layer small { display: block; margin-top: 4px; font-size: 14px; line-height: 21px; color: #6c757d; }
.green { color: #198754; } .cobalt { color: #0d6efd; } .aqua { color: #0dcaf0; }
.acts { display: flex; gap: 5px; padding-bottom: 9px; }
.acts button { width: 27px; height: 24px; border-radius: 3px; }
.a1 { background: #3498db; } .a2 { background: #2ecc71; } .a3 { background: #f39c12; } .a4 { background: #e74c3c; }

/* Map */
.mapside { flex: 1; min-width: 0; display: flex; flex-direction: column; }
.map { flex: none; position: relative; height: 319px; overflow: hidden; background: #f2efe9; }
.tiles { display: block; width: 100%; }
.zoomctl { position: absolute; left: 10px; top: 10px; border: 2px solid rgba(0, 0, 0, .2); border-radius: 4px; background-clip: padding-box; }
.zoomctl button { width: 30px; height: 30px; background: #fff; color: #000; }
.zoomctl button:disabled { background: #f4f4f4; color: #bbb; border-bottom: 1px solid #ccc; }
.attribution { position: absolute; right: 0; bottom: 0; padding: 0 5px; font: 12px/16px "Liberation Sans", Arial, sans-serif; color: #333; background: rgba(255, 255, 255, .8); }
.attribution a { color: #0078a8; }

/* Attribute table */
.attr { flex: 1; min-height: 0; display: flex; flex-direction: column; position: relative; background: #fff; box-shadow: 0 -4px 10px rgba(0, 0, 0, .1); }
.attrhead { flex: none; display: flex; align-items: center; gap: 12px; height: 70px; padding: 0 17px 0 14px; background: #3498db; border-bottom: 1px solid #2980b9; color: #fff; }
h4 { display: flex; align-items: center; gap: 7px; font-size: 16px; font-weight: 600; }
.badge { padding: 8px 12px; border-radius: 6px; background: #0dcaf0; }
.badge b { display: block; padding: 0 12px; border-radius: 6px; background: #dc3545; font-size: 12px; line-height: 28px; }
.attrbtns { display: flex; gap: 9px; margin-left: auto; }
.toolbar { flex: none; display: flex; align-items: center; gap: 12px; height: 75px; padding: 0 15px 0 17px; border: 2px solid #2196f3; border-radius: 8px; background: linear-gradient(135deg, #e3f2fd, #f3e5f5); }
.stats { margin-left: auto; display: flex; flex-direction: column; font-size: 14px; line-height: 21px; color: #6c757d; }
.counts, .counts span { display: flex; align-items: center; gap: 12px; }
.counts span { gap: 4px; }
.tablebox { flex: 1; min-height: 0; margin-top: 10px; display: flex; }
.scroller { flex: 1; min-width: 0; overflow: hidden; }
.innerbar { width: 8px; background: #f1f1f1; padding-top: 3px; }
.innerbar i { display: block; height: 15px; border-radius: 4px; background: #c1c1c1; }
table { width: 100%; margin-top: -44px; table-layout: fixed; border-collapse: separate; border-spacing: 0; font-size: 14px; }
tr { height: 98px; }
tr.editing { height: 139px; }
td { padding: 0 16px; border-left: 3px solid #28a745; border-bottom: 1px solid #198754; background: #eaebec; vertical-align: middle; white-space: nowrap; line-height: 20px; }
td:first-child { padding: 0 0 2px; border-left: 0; border-bottom-color: #dee2e6; background: #f2f2f2; }
.editing td { background: #f8f9fa; }
.editing td:first-child { background: #fff; }
td > input { display: block; margin: 0 auto; width: 13px; height: 13px; }
.c45 { width: 45px; } .c72 { width: 72px; } .c88 { width: 88px; } .c79 { width: 79px; } .c136 { width: 136px; } .c108 { width: 108px; } .c123 { width: 123px; }
.c109 { width: 109px; } .c105 { width: 105px; } .c110 { width: 110px; } .c102 { width: 102px; } .c106 { width: 106px; }
.edit { display: flex; flex-wrap: wrap; align-items: center; column-gap: 12px; }
.edit input { width: 100%; height: 33px; margin-bottom: 4px; padding: 0 8px; border: 2px solid #007bff; border-radius: 4px; background: #fff; color: #111; font: 14px Inter, sans-serif; outline: 0; }
.edit .focus { border-color: #0056b3; box-shadow: 0 0 0 3px rgba(0, 123, 255, .25); }
.edit input::selection { background: #3367d1; color: #fff; }
.edit span { font-size: 13px; line-height: 23px; color: #6c757d; }
.edit button { margin: 2px 0 3px 2px; color: #fff; }
.ok { width: 23px; height: 18px; border-radius: 9px; background: #27ae60; }
.edit .no { width: 22px; height: 20px; margin: 1px 0 2px 2px; border-radius: 10px; background: #6c757d; }
.tiphost { position: relative; }
.tip { position: absolute; left: 13px; top: 101px; z-index: 2; padding: 3px 6px; border: 1px solid #333; background: #fff; color: #444; font: 12px/17px "Open Sans", sans-serif; }

/* Taskbar */
.taskbar { flex: none; display: flex; align-items: stretch; gap: 1px; height: 40px; background: linear-gradient(90deg, #22333b, #24353d 25%, #2d383b 38%, #252f35 55%, #2d2b2a 73%, #1d2a32 86%, #1e2b31); color: #fff; }
.taskbar button { width: 48px; }
.run { box-shadow: inset 0 -2px #fdd9b0; border-inline: 4px solid transparent; }
.run.current { background: #51606a; border: 0; }
.tray { margin-left: auto; display: flex; align-items: center; gap: 10px; font: 12px/17px "Open Sans", sans-serif; }
.clock { display: flex; flex-direction: column; align-items: center; width: 66px; margin-right: 4px; white-space: nowrap; }
.peek { width: 1px; height: 40px; margin: 0 4px 0 10px; background: #68757b; }
```
FILE: main.js
```js
const field = document.getElementById('active-field');
field.focus({ preventScroll: true });
field.select();
```
